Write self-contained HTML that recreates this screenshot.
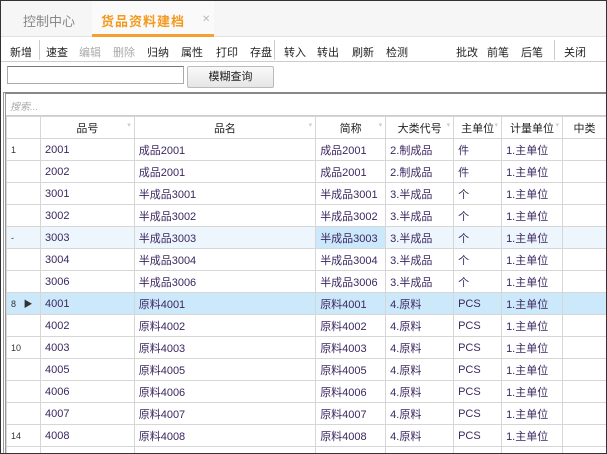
<!DOCTYPE html>
<html><head><meta charset="utf-8"><style>
*{margin:0;padding:0;box-sizing:border-box}
body{width:607px;height:454px;overflow:hidden;background:#fff;font-family:"Liberation Sans","Noto Sans CJK SC",sans-serif;font-size:11px;color:#222;position:relative}
.frame{position:absolute;left:0;top:0;width:607px;height:454px;border:1px solid #333;z-index:10}
.tabs{position:absolute;left:1px;top:1px;width:605px;height:36px;background:#f6f6f6;border-bottom:1px solid #e2e2e2}
.t1{position:absolute;left:22px;top:10px;font-size:13px;color:#888}
.t2{position:absolute;left:91px;top:0;width:122px;height:36px;background:#fafafa;border-bottom:3px solid #f5a030}
.t2 span{position:absolute;left:9px;top:10px;font-size:13px;color:#f39a1e;font-weight:bold;letter-spacing:1px}
.t2 i{position:absolute;left:110px;top:13px;font-style:normal;color:#bbb;font-size:10px}
.tb{position:absolute;left:1px;top:38px;width:605px;height:24px;border-bottom:1px solid #ccc;background:#fff}
.tb span{position:absolute;top:6px;font-size:11px}
.sep{position:absolute;top:2px;width:1px;height:20px;background:#ccc}
.inp{position:absolute;left:7px;top:66px;width:177px;height:18px;border:1px solid #aaa;border-top-color:#777}
.btn{position:absolute;left:187px;top:66px;width:87px;height:22px;border:1px solid #bbb;border-radius:2px;background:linear-gradient(#fafafa,#e6e6e6);text-align:center;line-height:20px;font-size:11px}
.grid{position:absolute;left:3px;top:92px;width:604px;height:361px;border-top:2px solid #888;border-left:3px double #999;overflow:hidden}
.ph{position:absolute;left:0;top:0;width:601px;height:22px;border-bottom:1px solid #ccc;color:#aaa;font-style:italic;font-size:10px;padding:4px 4px}
table{position:absolute;left:0;top:22px;border-collapse:collapse;table-layout:fixed}
td,th{height:22px;border:1px solid #d6d6d6;padding:0 4px;white-space:nowrap;overflow:hidden;font-weight:normal;text-align:left;font-size:11px;color:#3b2760}
th{color:#222;text-align:center;position:relative;background:#fff}
th:after{content:"▾";position:absolute;right:3px;top:4px;color:#ccc;font-size:7px}
th.n:after{content:""}
td.i{color:#333;font-size:9px}
td.up{vertical-align:top;padding-top:3px}
tr.s td{background:#cce8fb}
tr.h td{background:#eef6fd}
tr.h td.hc{background:#cce8fb}
</style></head><body>
<div class="frame"></div>
<div class="tabs"><span class="t1">控制中心</span><div class="t2"><span>货品资料建档</span><i>✕</i></div></div>
<div class="tb">
<span style="left:9px">新增</span><div class="sep" style="left:38px"></div>
<span style="left:45px">速查</span><span style="left:78px;color:#aaa">编辑</span><span style="left:112px;color:#aaa">删除</span>
<span style="left:146px">归纳</span><span style="left:180px">属性</span><span style="left:215px">打印</span><span style="left:249px">存盘</span><div class="sep" style="left:273px"></div>
<span style="left:283px">转入</span><span style="left:316px">转出</span><span style="left:351px">刷新</span><span style="left:385px">检测</span>
<span style="left:455px">批改</span><span style="left:486px">前笔</span><span style="left:520px">后笔</span><div class="sep" style="left:553px"></div><span style="left:563px">关闭</span>
</div>
<div class="inp"></div><div class="btn">模糊查询</div>
<div class="grid"><div class="ph">搜索...</div>
<table>
<colgroup><col style="width:34px"><col style="width:94px"><col style="width:182px"><col style="width:70px"><col style="width:68px"><col style="width:48px"><col style="width:61px"><col style="width:44px"></colgroup>
<tr><th class="n"></th><th>品号</th><th>品名</th><th>简称</th><th>大类代号</th><th>主单位</th><th>计量单位</th><th class="n">中类</th></tr>
<tr><td class="i">1</td><td>2001</td><td class="up">成品2001</td><td>成品2001</td><td>2.制成品</td><td>件</td><td>1.主单位</td><td></td></tr>
<tr><td class="i"></td><td>2002</td><td class="up">成品2001</td><td>成品2001</td><td>2.制成品</td><td>件</td><td>1.主单位</td><td></td></tr>
<tr><td class="i"></td><td>3001</td><td class="up">半成品3001</td><td>半成品3001</td><td>3.半成品</td><td>个</td><td>1.主单位</td><td></td></tr>
<tr><td class="i"></td><td>3002</td><td class="up">半成品3002</td><td>半成品3002</td><td>3.半成品</td><td>个</td><td>1.主单位</td><td></td></tr>
<tr class="h"><td class="i">-</td><td>3003</td><td class="up">半成品3003</td><td class="hc">半成品3003</td><td>3.半成品</td><td>个</td><td>1.主单位</td><td></td></tr>
<tr><td class="i"></td><td>3004</td><td class="up">半成品3004</td><td>半成品3004</td><td>3.半成品</td><td>个</td><td>1.主单位</td><td></td></tr>
<tr><td class="i"></td><td>3006</td><td class="up">半成品3006</td><td>半成品3006</td><td>3.半成品</td><td>个</td><td>1.主单位</td><td></td></tr>
<tr class="s"><td class="i">8 &nbsp;&nbsp;▶</td><td>4001</td><td class="up">原料4001</td><td>原料4001</td><td>4.原料</td><td>PCS</td><td>1.主单位</td><td></td></tr>
<tr><td class="i"></td><td>4002</td><td class="up">原料4002</td><td>原料4002</td><td>4.原料</td><td>PCS</td><td>1.主单位</td><td></td></tr>
<tr><td class="i">10</td><td>4003</td><td class="up">原料4003</td><td>原料4003</td><td>4.原料</td><td>PCS</td><td>1.主单位</td><td></td></tr>
<tr><td class="i"></td><td>4005</td><td class="up">原料4005</td><td>原料4005</td><td>4.原料</td><td>PCS</td><td>1.主单位</td><td></td></tr>
<tr><td class="i"></td><td>4006</td><td class="up">原料4006</td><td>原料4006</td><td>4.原料</td><td>PCS</td><td>1.主单位</td><td></td></tr>
<tr><td class="i"></td><td>4007</td><td class="up">原料4007</td><td>原料4007</td><td>4.原料</td><td>PCS</td><td>1.主单位</td><td></td></tr>
<tr><td class="i">14</td><td>4008</td><td class="up">原料4008</td><td>原料4008</td><td>4.原料</td><td>PCS</td><td>1.主单位</td><td></td></tr>
<tr><td></td><td></td><td></td><td></td><td></td><td></td><td></td><td></td></tr>
</table></div>
</body></html>
